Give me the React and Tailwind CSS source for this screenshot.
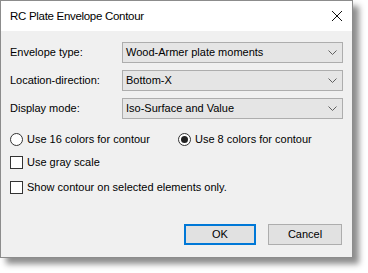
import React from 'react';

const Chevron = () => (
  <svg width="9" height="5" viewBox="0 0 9 5" className="shrink-0">
    <path d="M0.5 0.5 L4.5 4.5 L8.5 0.5" fill="none" stroke="#606060" strokeWidth="1" />
  </svg>
);

const Select = ({ value }) => (
  <div className="flex h-[21px] w-[221px] items-center justify-between border border-[#adadad] bg-[#e5e5e5] pl-[3px] pr-[5px]">
    <span>{value}</span>
    <Chevron />
  </div>
);

const Radio = ({ checked, label }) => (
  <div className="flex h-[15px] items-center gap-[4px]">
    <div className="flex h-[13px] w-[13px] items-center justify-center rounded-full border border-[#333] bg-white">
      {checked && <div className="h-[7px] w-[7px] rounded-full bg-[#222]" />}
    </div>
    <span>{label}</span>
  </div>
);

const Check = ({ label }) => (
  <div className="flex h-[15px] items-center gap-[4px]">
    <div className="h-[13px] w-[13px] border border-[#333] bg-white" />
    <span>{label}</span>
  </div>
);

export default function App() {
  const rows = [
    ['Envelope type:', 'Wood-Armer plate moments'],
    ['Location-direction:', 'Bottom-X'],
    ['Display mode:', 'Iso-Surface and Value'],
  ];

  return (
    <div className="h-[273px] w-[368px] bg-white text-[11px] leading-[15px] text-black" style={{ fontFamily: '"Liberation Sans", Arial, sans-serif' }}>
      <div className="flex h-[258px] w-[353px] flex-col border border-[#8c8c8c] shadow-[6px_6px_6px_rgba(0,0,0,0.45)]">
        <div className="flex h-[30px] shrink-0 items-center justify-between bg-white pl-[9px] pr-[9px]">
          <span className="text-[11.5px] tracking-[-0.3px]">RC Plate Envelope Contour</span>
          <svg width="10" height="10" viewBox="0 0 10 10" className="mr-[1px]">
            <path d="M0 0 L10 10 M10 0 L0 10" stroke="#111" strokeWidth="1" />
          </svg>
        </div>
        <div className="flex flex-1 flex-col bg-[#f0f0f0] pl-[9px] pr-[9px] pt-[11px]">
          <div className="flex flex-col gap-[7px]">
            {rows.map(([label, value]) => (
              <div key={label} className="flex items-center">
                <span className="w-[112px]">{label}</span>
                <Select value={value} />
              </div>
            ))}
          </div>
          <div className="mt-[13px] flex items-center">
            <div className="w-[168px]">
              <Radio label="Use 16 colors for contour" />
            </div>
            <Radio checked label="Use 8 colors for contour" />
          </div>
          <div className="mt-[8px]">
            <Check label="Use gray scale" />
          </div>
          <div className="mt-[10px]">
            <Check label="Show contour on selected elements only." />
          </div>
          <div className="mt-auto mb-[12px] flex justify-end gap-[12px] pr-[1px]">
            <button className="h-[21px] w-[72px] border-2 border-[#0078d7] bg-[#e1e1e1]">OK</button>
            <button className="h-[21px] w-[74px] border border-[#adadad] bg-[#e1e1e1]">Cancel</button>
          </div>
        </div>
      </div>
    </div>
  );
}
